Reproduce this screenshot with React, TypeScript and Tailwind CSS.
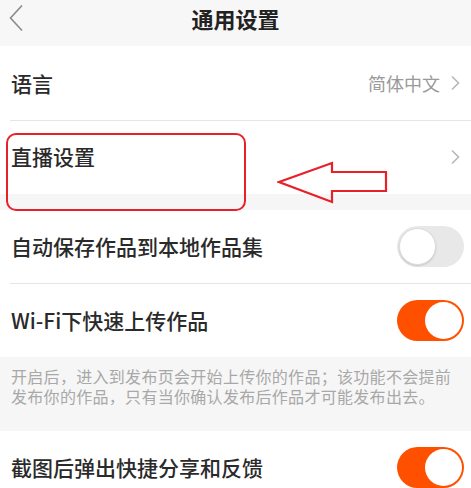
import React from "react"

const font = { fontFamily: '"Noto Sans CJK SC", "Noto Sans", sans-serif' }

function Chevron() {
  return (
    <svg width="10" height="16" viewBox="0 0 10 16" className="shrink-0">
      <path d="M2 1.5 L8.5 8 L2 14.5" fill="none" stroke="#b8b8b8" strokeWidth="1.6" />
    </svg>
  )
}

function Toggle({ on }: { on: boolean }) {
  return on ? (
    <div className="flex h-[41px] w-[67px] items-center justify-end rounded-full bg-[#ff5000] p-[2px]">
      <div className="h-[37px] w-[37px] rounded-full bg-white" />
    </div>
  ) : (
    <div className="flex h-[41px] w-[67px] items-center justify-start rounded-full bg-[#e8e8e8] p-[2px]">
      <div className="h-[37px] w-[37px] rounded-full border border-[#dcdcdc] bg-white shadow-[0_1px_2px_rgba(0,0,0,0.15)]" />
    </div>
  )
}

function Row({ label, children, h = "h-[73px]" }: { label: string; children?: React.ReactNode; h?: string }) {
  return (
    <div className={`flex ${h} items-center justify-between bg-white pl-[11px] pr-[7px]`}>
      <span className="text-[21px] font-medium leading-none text-[#2a2a2a]">{label}</span>
      {children}
    </div>
  )
}

export default function App() {
  return (
    <div className="relative min-h-[488px] w-full overflow-hidden bg-[#f6f6f6]" style={font}>
      {/* header */}
      <div className="relative flex h-[46px] justify-center bg-[#f7f7f7] pt-[7px]">
        <svg width="16" height="28" viewBox="0 0 16 28" className="absolute left-[8px] top-[4px]">
          <path d="M14 1.5 L2.5 14 L14 26.5" fill="none" stroke="#8a8a8a" strokeWidth="1.6" />
        </svg>
        <span className="text-[22px] font-semibold leading-[22px] text-[#222]">通用设置</span>
      </div>

      <div className="bg-white">
        <Row label="语言" h="h-[74px]">
          <div className="flex items-center gap-[10px] pr-[4px]">
            <span className="text-[18px] leading-none text-[#9a9a9a]">简体中文</span>
            <Chevron />
          </div>
        </Row>
        <div className="ml-[10px] h-px bg-[#e6e6e6]" />
        <div className="flex h-[73px] items-center justify-between bg-white pb-[2px] pl-[11px] pr-[11px]">
          <span className="text-[21px] font-medium leading-none text-[#2a2a2a]">直播设置</span>
          <Chevron />
        </div>
      </div>

      <div className="h-[16px] bg-[#f6f6f6]" />

      <div className="bg-white">
        <Row label="自动保存作品到本地作品集">
          <Toggle on={false} />
        </Row>
        <div className="ml-[10px] h-px bg-[#e6e6e6]" />
        <Row label="Wi-Fi下快速上传作品">
          <Toggle on />
        </Row>
      </div>

      <div className="h-[74px] bg-[#f6f6f6] px-[11px] pt-[9px] text-[16px] leading-[20px] tracking-[0.3px] text-[#a8a8a8]">
        <p>开启后，进入到发布页会开始上传你的作品；该功能不会提前</p>
        <p>发布你的作品，只有当你确认发布后作品才可能发布出去。</p>
      </div>

      <Row label="截图后弹出快捷分享和反馈">
        <Toggle on />
      </Row>

      {/* annotation */}
      <div className="absolute left-[6px] top-[133px] h-[78px] w-[240px] rounded-[10px] border-2 border-[#e8202a]" />
      <svg width="112" height="44" viewBox="0 0 112 44" className="absolute left-[277px] top-[161px]">
        <path
          d="M2 21 L55 2 L55 11 L109 11 L109 30 L55 30 L55 41 Z"
          fill="none"
          stroke="#e8202a"
          strokeWidth="2.2"
          strokeLinejoin="miter"
        />
      </svg>
    </div>
  )
}
